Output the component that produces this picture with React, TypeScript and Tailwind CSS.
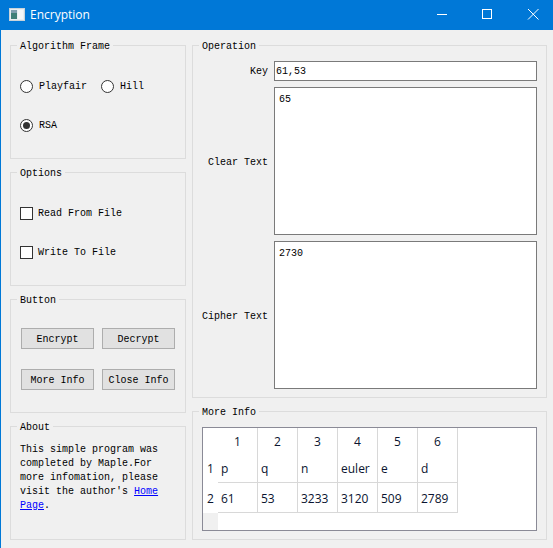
import React from 'react';

const mono = "font-['Liberation_Mono',monospace] text-[10px] leading-[14px] text-black";
const label = `${mono} pt-[2px]`;

const Group = ({ title, className, children }: { title: string; className: string; children: React.ReactNode }) => (
  <div className={`relative border border-[#dcdcdc] ${className}`}>
    <span className={`absolute -top-[6px] left-[6px] bg-[#f0f0f0] px-[3px] ${mono}`}>{title}</span>
    {children}
  </div>
);

const Radio = ({ text, checked }: { text: string; checked?: boolean }) => (
  <label className="flex items-center gap-[6px]">
    <span className="flex h-[13px] w-[13px] items-center justify-center rounded-full border border-[#333] bg-white">
      {checked && <span className="h-[7px] w-[7px] rounded-full bg-[#333]" />}
    </span>
    <span className={label}>{text}</span>
  </label>
);

const Check = ({ text }: { text: string }) => (
  <label className="flex items-center gap-[5px]">
    <span className="h-[13px] w-[13px] border border-[#333] bg-white" />
    <span className={label}>{text}</span>
  </label>
);

const Btn = ({ text }: { text: string }) => (
  <button className={`h-[21px] w-[73px] border border-[#adadad] bg-[#e1e1e1] ${label}`}>{text}</button>
);

const columns = ['1', '2', '3', '4', '5', '6'];
const rows = [
  ['p', 'q', 'n', 'euler', 'e', 'd'],
  ['61', '53', '3233', '3120', '509', '2789'],
];

const App: React.FC = () => {
  return (
    <div className="flex h-[548px] w-[553px] flex-col overflow-hidden bg-[#f0f0f0]">
      <div className="flex h-[30px] shrink-0 items-center bg-[#0078d7] pl-[9px] text-white">
        <svg width="16" height="14" viewBox="0 0 16 14" className="mr-[5px]">
          <rect x="0.5" y="0.5" width="15" height="12" fill="#e8eef2" stroke="#c9d3da" />
          <rect x="2" y="2" width="6" height="9" fill="#3f7f78" />
          <rect x="2" y="2" width="6" height="3" fill="#7f9fb0" />
          <rect x="9" y="2" width="5" height="9" fill="#f4f6f8" />
        </svg>
        <span className="font-['Open_Sans',sans-serif] text-[12px]">Encryption</span>
        <div className="ml-auto flex h-full items-center">
          <svg width="46" height="30" viewBox="0 0 46 30" fill="none" stroke="white">
            <path d="M22 14.5H32" />
          </svg>
          <svg width="46" height="30" viewBox="0 0 46 30" fill="none" stroke="white">
            <rect x="21.5" y="9.5" width="9" height="9" />
          </svg>
          <svg width="46" height="30" viewBox="0 0 46 30" fill="none" stroke="white">
            <path d="M21 9L31.5 19.5M31.5 9L21 19.5" />
          </svg>
        </div>
      </div>

      <div className="flex min-h-0 flex-1 gap-[6px] border-l border-[#0078d7] pl-[9px] pt-[15px]">
        <div className="flex w-[176px] shrink-0 flex-col gap-[13px]">
          <Group title="Algorithm Frame" className="h-[114px] pl-[9px] pt-[32px]">
            <div className="flex gap-[14px]">
              <Radio text="Playfair" />
              <Radio text="Hill" />
            </div>
            <div className="mt-[23px]">
              <Radio text="RSA" checked />
            </div>
          </Group>
          <Group title="Options" className="h-[114px] pl-[9px] pt-[32px]">
            <Check text="Read From File" />
            <div className="mt-[23px]">
              <Check text="Write To File" />
            </div>
          </Group>
          <Group title="Button" className="h-[114px] pl-[10px] pt-[28px]">
            <div className="grid w-[154px] grid-cols-2 gap-x-[8px] gap-y-[20px]">
              <Btn text="Encrypt" />
              <Btn text="Decrypt" />
              <Btn text="More Info" />
              <Btn text="Close Info" />
            </div>
          </Group>
          <Group title="About" className="h-[114px] pl-[9px] pt-[16px]">
            <p className={`w-[150px] ${mono}`}>
              This simple program was completed by Maple.For more infomation, please visit the author's{' '}
              <a href="#" className="text-[#0000ff] underline">Home Page</a>.
            </p>
          </Group>
        </div>

        <div className="flex w-[355px] shrink-0 flex-col gap-[13px]">
          <Group title="Operation" className="h-[353px] pl-[6px] pt-[15px]">
            <div className="grid h-[328px] w-[338px] grid-cols-[69px_263px] grid-rows-[20px_148px_148px] items-center gap-x-[6px] gap-y-[6px]">
              <span className={`text-right ${label}`}>Key</span>
              <div className={`flex h-[20px] items-center border border-[#7a7a7a] bg-white pl-[1px] ${label}`}>61,53</div>
              <span className={`text-right ${mono} pt-[4px]`}>Clear Text</span>
              <div className={`h-[148px] border border-[#7a7a7a] bg-white pl-[4px] pt-[5px] ${mono}`}>65</div>
              <span className={`text-right ${mono} pt-[4px]`}>Cipher Text</span>
              <div className={`h-[148px] border border-[#7a7a7a] bg-white pl-[4px] pt-[5px] ${mono}`}>2730</div>
            </div>
          </Group>
          <Group title="More Info" className="h-[129px] pl-[9px] pt-[15px]">
            <div className="h-[104px] w-[335px] border border-[#8a8a96] bg-white font-['Open_Sans',sans-serif] text-[12px] text-[#0a1430]">
              <div className="flex h-full">
                <div className="flex w-[15px] shrink-0 flex-col">
                  <div className="h-[25px]" />
                  <div className="flex h-[30px] items-center justify-center pt-[2px]">1</div>
                  <div className="flex h-[30px] items-center justify-center pt-[2px]">2</div>
                  <div className="flex-1 bg-[#f0f0f0]" />
                </div>
                <div className="grid h-[85px] grid-cols-[repeat(6,40px)] grid-rows-[25px_30px_30px]">
                  {columns.map((c) => (
                    <div key={c} className="flex items-center justify-center border-r border-[#d8d8d8] pt-[2px]">{c}</div>
                  ))}
                  {rows.flat().map((v, i) => (
                    <div key={i} className="flex items-center border-b border-r border-[#d8d8d8] pl-[3px] pt-[2px]">{v}</div>
                  ))}
                </div>
              </div>
            </div>
          </Group>
        </div>
      </div>
    </div>
  );
};

export default App;
